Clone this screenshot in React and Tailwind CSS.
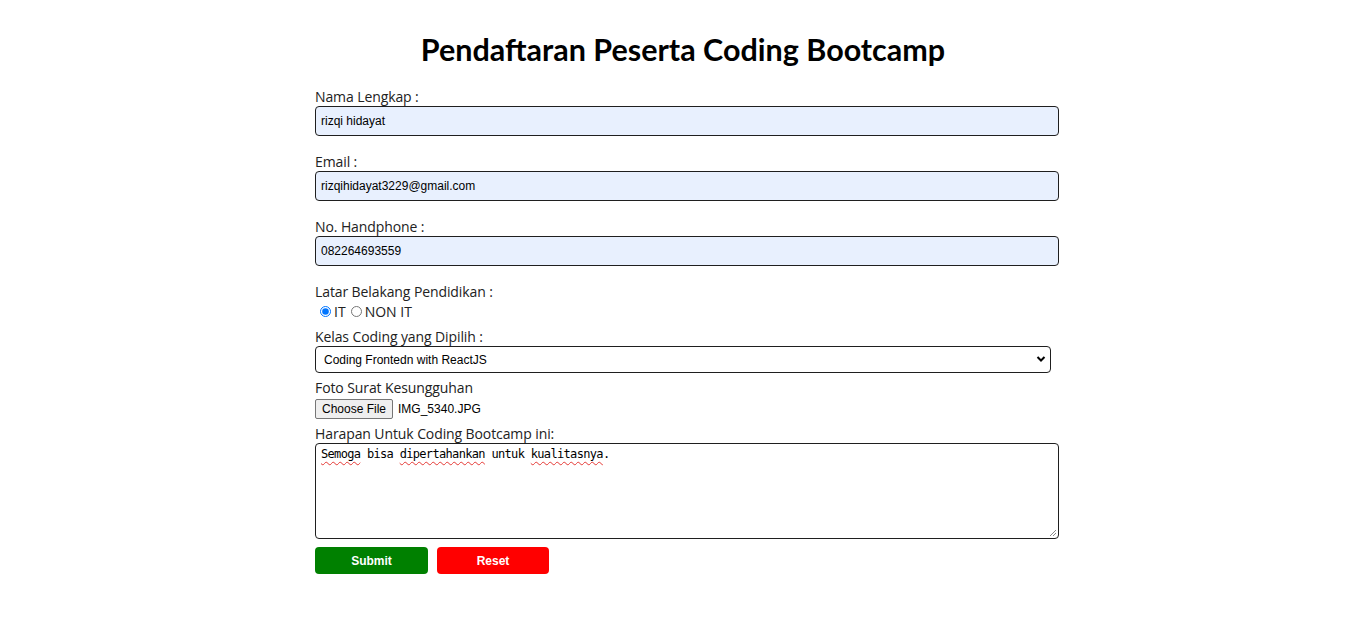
import React from 'react';

const label = "block h-[19px] leading-[19px] text-[14px] tracking-[-0.1px] text-[#222] font-['Open_Sans','Noto_Sans',sans-serif]";
const field = "block w-full h-[30px] px-[5px] bg-[#e8f0fe] border border-[#1f1f1f] rounded-[4px] text-[12px] text-black font-['Liberation_Sans',Arial,sans-serif] outline-none";

function Wavy({ children }) {
  return <span className="underline decoration-wavy decoration-[#e53935] decoration-1 underline-offset-[3px]">{children}</span>;
}

export default function App() {
  return (
    <div className="min-h-[624px] bg-white pt-[29px]">
      <h1 className="text-center text-[30.5px] leading-[40px] font-bold text-black font-['Lato','Noto_Sans',sans-serif]">
        Pendaftaran Peserta Coding Bootcamp
      </h1>

      <form className="mx-auto w-[752px] pl-2 mt-[18px]" onSubmit={(e) => e.preventDefault()}>
        <label className={label}>Nama Lengkap :</label>
        <input className={field} defaultValue="rizqi hidayat" />

        <label className={label + " mt-4"}>Email :</label>
        <input className={field} defaultValue="rizqihidayat3229@gmail.com" />

        <label className={label + " mt-4"}>No. Handphone :</label>
        <input className={field} defaultValue="082264693559" />

        <label className={label + " mt-4"}>Latar Belakang Pendidikan :</label>
        <div className="flex items-center h-[20px] text-[14px] text-[#222] font-['Open_Sans','Noto_Sans',sans-serif]">
          <input type="radio" name="bg" defaultChecked className="ml-[5px] mr-[3px] w-[11px] h-[11px] accent-[#0075ff]" />
          <span>IT</span>
          <input type="radio" name="bg" className="ml-[5px] mr-[3px] w-[11px] h-[11px]" />
          <span>NON IT</span>
        </div>

        <label className={label + " mt-[6px]"}>Kelas Coding yang Dipilih :</label>
        <div className="relative w-[736px]">
          <select className="appearance-none block w-full h-[27px] pl-[8px] border border-[#1f1f1f] rounded-[4px] bg-white text-[12px] text-black font-['Liberation_Sans',Arial,sans-serif] outline-none" defaultValue="react">
            <option value="react">Coding Frontedn with ReactJS</option>
            <option value="node">Coding Backend with NodeJS</option>
          </select>
          <svg className="pointer-events-none absolute right-[5px] top-[9px]" width="10" height="8" viewBox="0 0 10 8">
            <path d="M1.5 2 L5 5.5 L8.5 2" fill="none" stroke="#000" strokeWidth="2" />
          </svg>
        </div>

        <label className={label + " mt-[5px]"}>Foto Surat Kesungguhan</label>
        <div className="flex items-center h-[23px] gap-[5px] text-[12px] text-black font-['Liberation_Sans',Arial,sans-serif]">
          <button type="button" className="h-[20px] px-[6px] bg-[#efefef] border border-[#767676] rounded-[2px] text-[12px] leading-[18px]">Choose File</button>
          <span>IMG_5340.JPG</span>
        </div>

        <label className={label + " mt-[4px]"}>Harapan Untuk Coding Bootcamp ini:</label>
        <div className="relative w-full h-[96px] border border-[#1f1f1f] rounded-[4px] px-[5px] pt-[2px] text-[12px] leading-[16px] text-black font-['DejaVu_Sans_Mono','Liberation_Mono',monospace] tracking-[-0.67px]">
          <Wavy>Semoga</Wavy> bisa <Wavy>dipertahankan</Wavy> untuk <Wavy>kualitasnya</Wavy>.
          <svg className="absolute right-[1px] bottom-[1px]" width="9" height="9" viewBox="0 0 9 9">
            <path d="M8 2 L2 8 M8 5 L5 8" stroke="#888" strokeWidth="1" />
          </svg>
        </div>

        <div className="flex gap-[9px] mt-[8px]">
          <button type="submit" className="w-[113px] h-[27px] bg-[#008000] rounded-[4px] text-white text-[12px] font-bold font-['Liberation_Sans',Arial,sans-serif]">Submit</button>
          <button type="reset" className="w-[112px] h-[27px] bg-[#ff0000] rounded-[4px] text-white text-[12px] font-bold font-['Liberation_Sans',Arial,sans-serif]">Reset</button>
        </div>
      </form>
    </div>
  );
}
